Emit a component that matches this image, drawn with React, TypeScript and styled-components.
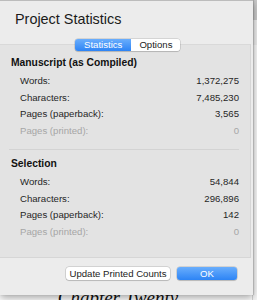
import React from "react";
import styled, { createGlobalStyle, css } from "styled-components";

const GlobalStyle = createGlobalStyle`
  html, body {
    margin: 0;
    padding: 0;
    background: #ffffff;
  }
  body {
    font-family: "Liberation Sans", Arial, sans-serif;
  }
`;

type Row = { label: string; value: string; disabled?: boolean };

const manuscript: Row[] = [
  { label: "Words:", value: "1,372,275" },
  { label: "Characters:", value: "7,485,230" },
  { label: "Pages (paperback):", value: "3,565" },
  { label: "Pages (printed):", value: "0", disabled: true },
];

const selection: Row[] = [
  { label: "Words:", value: "54,844" },
  { label: "Characters:", value: "296,896" },
  { label: "Pages (paperback):", value: "142" },
  { label: "Pages (printed):", value: "0", disabled: true },
];

export default function App() {
  return (
    <>
      <GlobalStyle />
      <Page>
        <Document>
          <DocBody>
            <ChapterTitle>Chapter Twenty</ChapterTitle>
          </DocBody>
          <ScrollStrip>
            <ScrollThumb />
          </ScrollStrip>
        </Document>

        <Sheet>
          <Header>
            <Title>Project Statistics</Title>
          </Header>
          <TabBox>
            <Segments>
              <Segment active>Statistics</Segment>
              <Segment>Options</Segment>
            </Segments>
            <Section title="Manuscript (as Compiled)" rows={manuscript} />
            <Divider />
            <Section title="Selection" rows={selection} />
          </TabBox>
          <Footer>
            <Button>Update Printed Counts</Button>
            <Button primary>OK</Button>
          </Footer>
        </Sheet>
      </Page>
    </>
  );
}

function Section({ title, rows }: { title: string; rows: Row[] }) {
  return (
    <SectionWrap>
      <SectionTitle>{title}</SectionTitle>
      {rows.map((r) => (
        <StatRow key={r.label} disabled={r.disabled}>
          <span>{r.label}</span>
          <span>{r.value}</span>
        </StatRow>
      ))}
    </SectionWrap>
  );
}

const Page = styled.div`
  position: relative;
  width: 257px;
  height: 300px;
  overflow: hidden;
  background: #ffffff;
`;

const Document = styled.div`
  display: flex;
  height: 300px;
`;

const DocBody = styled.div`
  flex: 1;
  display: flex;
  justify-content: center;
  padding-top: 288px;
  padding-right: 16px;
`;

const ChapterTitle = styled.div`
  font-family: "Liberation Serif", "DejaVu Serif", serif;
  font-style: italic;
  font-size: 19px;
  line-height: 20px;
  color: #111;
`;

const ScrollStrip = styled.div`
  width: 4px;
  display: flex;
  flex-direction: column;
  background: linear-gradient(#ececec 0, #ececec 45px, #f7f7f7 45px);
  border-left: 1px solid #d6d6d6;
`;

const ScrollThumb = styled.div`
  height: 20px;
  background: #c9c9c9;
`;

const Sheet = styled.div`
  position: absolute;
  top: 0;
  left: 0;
  width: 253px;
  height: 295px;
  display: flex;
  flex-direction: column;
  background: #ececec;
  border-top: 1px solid #bcbcbc;
  box-sizing: border-box;
  box-shadow: 0 3px 8px rgba(0, 0, 0, 0.35), 1px 0 1px rgba(0, 0, 0, 0.15);
`;

const Header = styled.div`
  height: 43px;
  padding-left: 15px;
  display: flex;
  align-items: flex-start;
  padding-top: 10px;
  box-sizing: border-box;
`;

const Title = styled.div`
  font-size: 14.4px;
  line-height: 17px;
  color: #1a1a1a;
`;

const TabBox = styled.div`
  position: relative;
  width: 251px;
  height: 214px;
  background: #e3e3e3;
  border-top: 1px solid #d9d9d9;
  border-right: 1px solid #d6d6d6;
  border-bottom: 1px solid #d6d6d6;
  box-sizing: border-box;
  padding: 10px 11px 0 11px;
`;

const Segments = styled.div`
  position: absolute;
  top: -6px;
  left: 75px;
  display: flex;
  height: 12px;
  border-radius: 3px;
  box-shadow: 0 0 0 0.5px rgba(0, 0, 0, 0.2), 0 1px 1px rgba(0, 0, 0, 0.12);
  overflow: hidden;
`;

const Segment = styled.div<{ active?: boolean }>`
  font-size: 9.6px;
  line-height: 12px;
  padding: 0 8px;
  background: #ffffff;
  color: #222;
  ${({ active }) =>
    active &&
    css`
      background: linear-gradient(#6aaefc, #2d84f5);
      color: #ffffff;
      padding: 0 9px;
    `}
`;

const SectionWrap = styled.div`
  display: flex;
  flex-direction: column;
`;

const SectionTitle = styled.div`
  font-weight: bold;
  font-size: 10.3px;
  line-height: 16px;
  margin-bottom: 2px;
  color: #111;
`;

const StatRow = styled.div<{ disabled?: boolean }>`
  display: flex;
  justify-content: space-between;
  padding-left: 9px;
  font-size: 9.6px;
  line-height: 16.5px;
  color: ${({ disabled }) => (disabled ? "#a6a6a6" : "#262626")};
`;

const Divider = styled.div`
  height: 1px;
  margin: 10px 0 6px -2px;
  background: #d3d3d3;
`;

const Footer = styled.div`
  display: flex;
  justify-content: flex-end;
  gap: 7px;
  padding: 9px 16px 0 0;
`;

const Button = styled.div<{ primary?: boolean }>`
  height: 13px;
  line-height: 13px;
  font-size: 9.6px;
  text-align: center;
  border-radius: 3px;
  background: #ffffff;
  color: #222;
  width: 104px;
  box-shadow: 0 0 0 0.5px rgba(0, 0, 0, 0.22), 0 1px 1px rgba(0, 0, 0, 0.12);
  ${({ primary }) =>
    primary &&
    css`
      width: 60px;
      background: linear-gradient(#6aaefc, #2d84f5);
      color: #ffffff;
    `}
`;
